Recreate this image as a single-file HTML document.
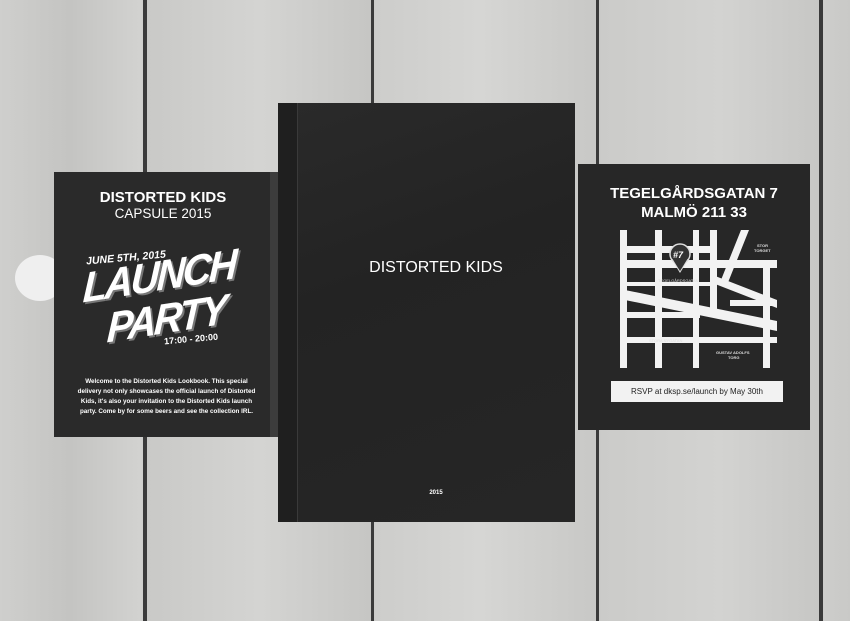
<!DOCTYPE html>
<html><head><meta charset="utf-8"><style>
body{margin:0;width:850px;height:621px;overflow:hidden;position:relative;font-family:"Liberation Sans",sans-serif;
background:linear-gradient(90deg,#cfcfcd 0,#c4c4c2 70px,#d2d2d0 140px,#c9c9c7 146px,#d4d4d2 260px,#c6c6c4 370px,#cdcdcb 376px,#d6d6d4 480px,#c8c8c6 596px,#cbcbc9 602px,#d3d3d1 720px,#c7c7c5 818px,#cdcdcb 824px,#c9c9c7 850px);}
.gap{position:absolute;top:0;height:621px;width:4px;background:#3a3a3a}
.card{position:absolute;background:#262626;color:#fff;text-align:center}
.b{font-weight:bold}
.lp{position:absolute;font-weight:bold;font-style:italic;font-size:40px;line-height:40px;letter-spacing:-2.5px;text-shadow:2px 2px 0 #777;transform:rotate(-9deg) skewX(-12deg) scaleY(1.05);transform-origin:left bottom;white-space:nowrap}
</style></head><body>
<div class="gap" style="left:143px"></div>
<div class="gap" style="left:371px;width:3px"></div>
<div class="gap" style="left:596px;width:3px"></div>
<div class="gap" style="left:819px;width:4px"></div>
<div style="position:absolute;left:15px;top:255px;width:50px;height:46px;border-radius:50%;background:#efefef"></div>

<div class="card" style="left:54px;top:172px;width:224px;height:265px;background:#2a2a2a">
 <div style="position:absolute;right:0;top:0;width:8px;height:265px;background:#3c3c3c"></div>
 <div class="b" style="position:absolute;left:0;width:218px;top:17px;font-size:15px;">DISTORTED KIDS</div>
 <div style="position:absolute;left:0;width:218px;top:34px;font-size:13.5px;">CAPSULE 2015</div>
 <div class="b" style="position:absolute;left:32px;top:80px;font-size:10.5px;font-style:italic;transform:rotate(-5deg)">JUNE 5TH, 2015</div>
 <div class="lp" style="left:28px;top:98px">LAUNCH</div>
 <div class="lp" style="left:52px;top:138px">PARTY</div>
 <div class="b" style="position:absolute;left:110px;top:162px;font-size:9px;transform:rotate(-5deg)">17:00 - 20:00</div>
 <div class="b" style="position:absolute;left:20px;width:185px;top:205px;font-size:6.3px;line-height:10px">Welcome to the Distorted Kids Lookbook. This special delivery not only showcases the official launch of Distorted Kids, it's also your invitation to the Distorted Kids launch party. Come by for some beers and see the collection IRL.</div>
</div>

<div class="card" style="left:578px;top:164px;width:232px;height:266px;background:#272727">
 <div class="b" style="position:absolute;left:0;width:232px;top:20px;font-size:15px;line-height:19px">TEGELGÅRDSGATAN 7<br>MALMÖ 211 33</div>
 <div style="position:absolute;left:33px;top:217px;width:172px;height:21px;background:#f2f2f2;color:#222;font-size:8px;line-height:21px">RSVP at dksp.se/launch by May 30th</div>
</div>
<svg style="position:absolute;left:0;top:0" width="850" height="621">
 <g fill="#f2f2f2">
  <rect x="620" y="230" width="7" height="138"/>
  <rect x="655" y="230" width="7" height="138"/>
  <rect x="693" y="230" width="6" height="138"/>
  <rect x="710" y="230" width="7" height="80"/>
  <rect x="763" y="260" width="7" height="108"/>
  <rect x="620" y="246" width="97" height="7"/>
  <rect x="620" y="260" width="157" height="8"/>
  <rect x="620" y="282" width="97" height="4"/>
  <rect x="620" y="312" width="80" height="6"/>
  <rect x="620" y="337" width="157" height="6"/>
  <rect x="730" y="300" width="47" height="6"/>
  <polygon points="620,289 777,321 777,331 620,299"/>
  <polygon points="710,274 777,300 777,308 710,282"/>
  <polygon points="741,230 749,230 727,285 719,285"/>
 </g>
 <circle cx="680" cy="254" r="10" fill="#333" stroke="#ddd" stroke-width="1.5"/>
 <path d="M672 259 L680 272 L688 259" fill="#333" stroke="#ddd"/>
 <text x="673" y="258" fill="#fff" font-size="9" font-weight="bold" font-style="italic" font-family="Liberation Sans">#7</text>
 <g font-family="Liberation Sans" font-size="4" fill="#ddd">
  <text x="658" y="282">TEGELGÅRDSGATAN</text>
  <text x="649" y="342">STORA NYGATAN</text>
  <text x="757" y="247" font-weight="bold">STOR</text><text x="754" y="252" font-weight="bold">TORGET</text>
  <text x="716" y="354" font-weight="bold">GUSTAV ADOLFS</text><text x="728" y="359" font-weight="bold">TORG</text>
 </g>
</svg>

<div class="card" style="left:278px;top:103px;width:297px;height:419px;background:linear-gradient(160deg,#2a2a2a,#232323 40%,#262626)">
 <div style="position:absolute;left:0;top:0;width:19px;height:419px;background:#1f1f1f;border-right:1px solid #3a3a3a"></div>
 <div style="position:absolute;left:19px;width:278px;top:156px;font-size:16px;">DISTORTED KIDS</div>
 <div class="b" style="position:absolute;left:19px;width:278px;top:387px;font-size:6px;">2015</div>
</div>
</body></html>
